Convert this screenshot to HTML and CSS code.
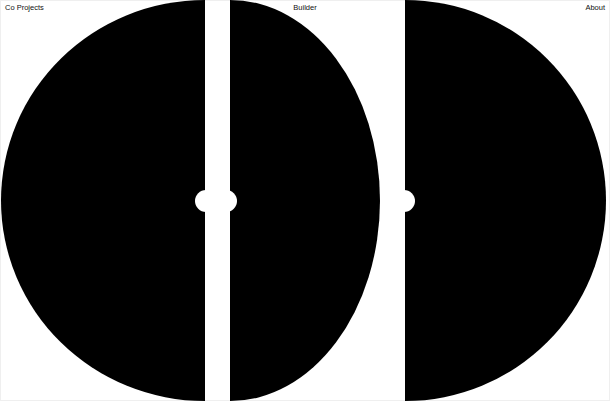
FILE: index.html
```html
<!DOCTYPE html>
<html>
<head>
<meta charset="utf-8">
<link rel="stylesheet" href="styles.css">
</head>
<body>
<div class="page">
  <nav class="nav">
    <span class="nav-item nav-left">Co Projects</span>
    <span class="nav-item nav-center">Builder</span>
    <span class="nav-item nav-right">About</span>
  </nav>
  <div class="shapes">
    <svg class="shape shape-left" viewBox="0 0 205 401" width="205" height="401">
      <path d="M205,0 A204,200.5 0 0 0 205,401 Z" fill="#000"/>
      <circle cx="206" cy="201" r="11" fill="#fff"/>
    </svg>
    <svg class="shape shape-mid" viewBox="0 0 150 401" width="150" height="401">
      <path d="M0,0 A150,200.5 0 0 1 0,401 Z" fill="#000"/>
      <circle cx="-4" cy="201" r="11" fill="#fff"/>
    </svg>
    <svg class="shape shape-right" viewBox="0 0 205 401" width="205" height="401">
      <path d="M0,0 A201,200.5 0 0 1 0,401 Z" fill="#000"/>
      <circle cx="-1" cy="201" r="11" fill="#fff"/>
    </svg>
  </div>
</div>
</body>
</html>
```
FILE: styles.css
```css
html, body {
  margin: 0;
  padding: 0;
  background: #fff;
}
.page {
  position: relative;
  width: 610px;
  height: 401px;
  overflow: hidden;
  box-shadow: inset 0 0 0 1px #efefef;
  font-family: "Liberation Sans", Arial, sans-serif;
}
.nav {
  position: absolute;
  top: 0;
  left: 0;
  right: 0;
  display: grid;
  grid-template-columns: 1fr auto 1fr;
  padding: 3px 5px 0 5px;
  font-size: 7.5px;
  line-height: 10px;
  color: #111;
  z-index: 1;
}
.nav-left {
  justify-self: start;
}
.nav-center {
  justify-self: center;
}
.nav-right {
  justify-self: end;
}
.shapes {
  display: flex;
  height: 401px;
  gap: 25px;
}
.shape {
  display: block;
  flex: none;
  overflow: visible;
}
```
